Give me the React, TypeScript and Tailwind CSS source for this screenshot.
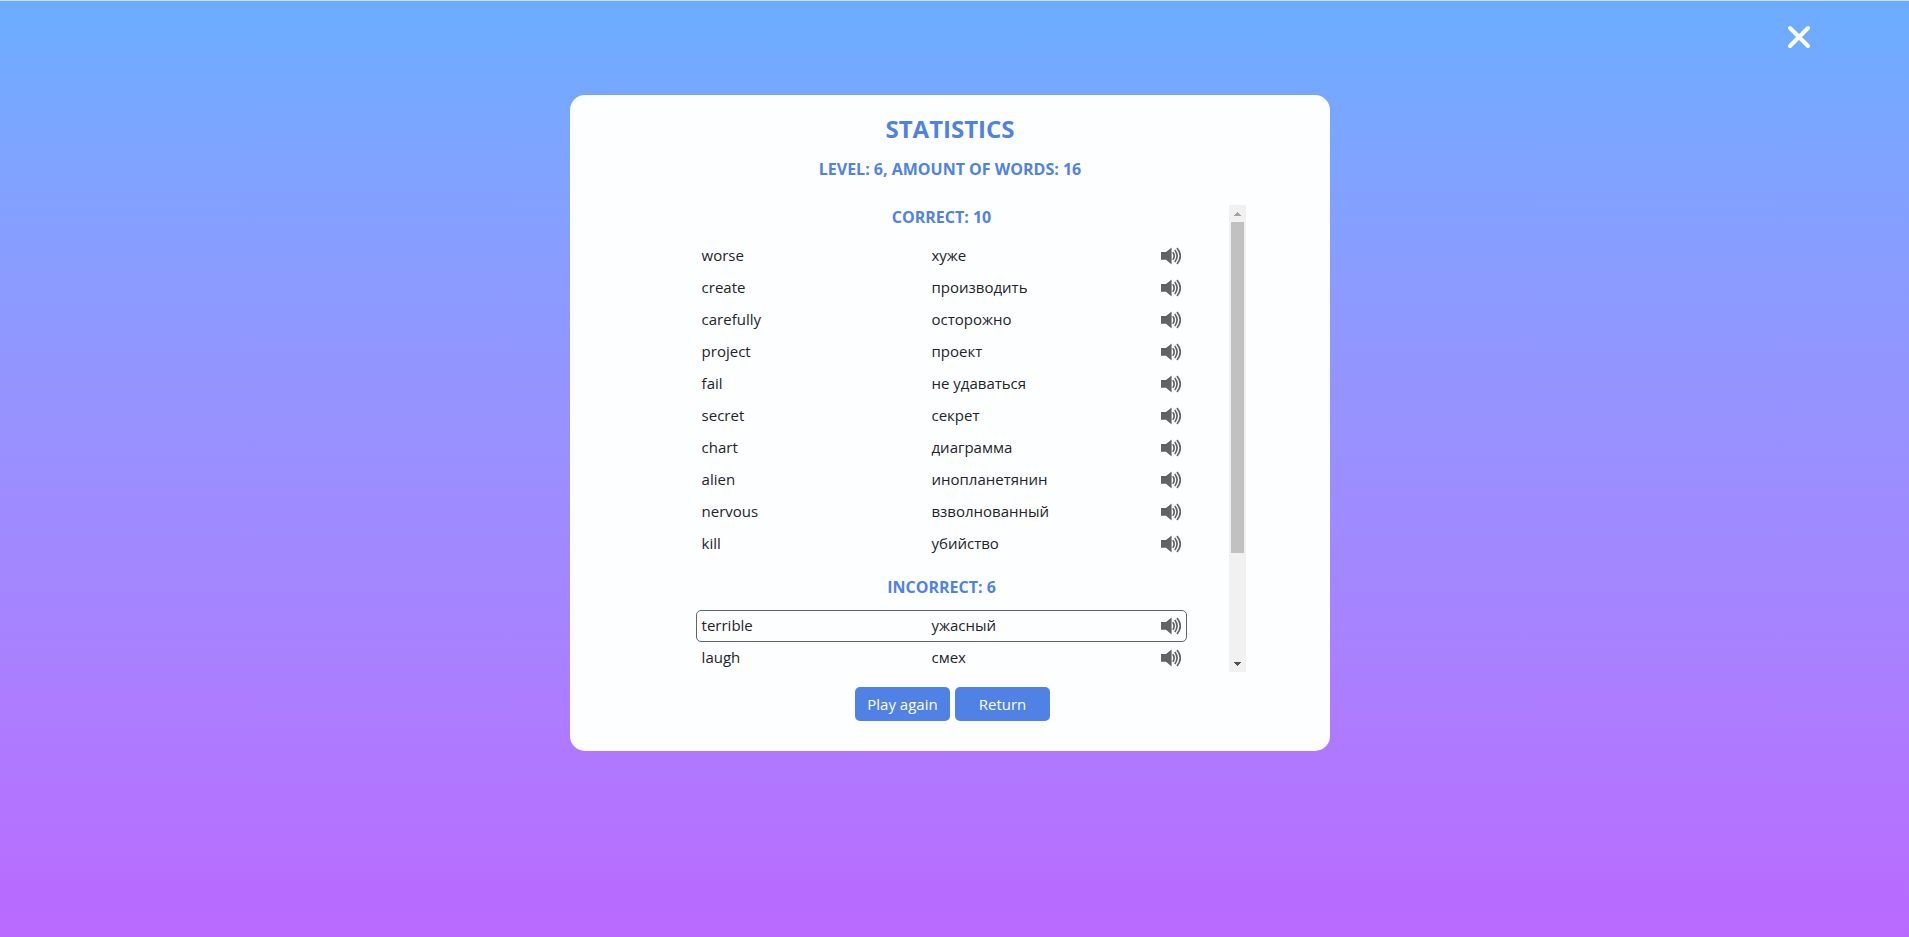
import React from "react";

type Word = { en: string; ru: string; selected?: boolean };

const correct: Word[] = [
  { en: "worse", ru: "хуже" },
  { en: "create", ru: "производить" },
  { en: "carefully", ru: "осторожно" },
  { en: "project", ru: "проект" },
  { en: "fail", ru: "не удаваться" },
  { en: "secret", ru: "секрет" },
  { en: "chart", ru: "диаграмма" },
  { en: "alien", ru: "инопланетянин" },
  { en: "nervous", ru: "взволнованный" },
  { en: "kill", ru: "убийство" },
];

const incorrect: Word[] = [
  { en: "terrible", ru: "ужасный", selected: true },
  { en: "laugh", ru: "смех" },
];

function SpeakerIcon() {
  return (
    <svg width="20" height="18" viewBox="0 0 20 18" aria-hidden="true">
      <path d="M0 5h5L10.6 .6v16.8L5 12.8H0z" fill="#636363" />
      <g fill="none" stroke="#636363" strokeWidth="1.7">
        <path d="M11.8 5.2q2.8 3.8 0 7.6" />
        <path d="M13.8 3q4.6 6 0 12" />
        <path d="M16 1q6.6 8 0 16" />
      </g>
    </svg>
  );
}

function WordTable({ title, words }: { title: string; words: Word[] }) {
  return (
    <table className="block w-full">
      <caption className="block pb-[13px] text-base leading-5 font-bold text-[#5082e6]">{title}</caption>
      <tbody className="block">
        {words.map((word) => (
          <tr
            key={word.en}
            className={
              word.selected
                ? "grid h-8 grid-cols-[48fr_48fr_20px] items-center rounded-[5px] border border-[#636363] px-[5px]"
                : "grid h-8 grid-cols-[48fr_48fr_20px] items-center rounded-[5px] border border-transparent px-[5px]"
            }
          >
            <td className="p-0 pb-0.5">{word.en}</td>
            <td className="p-0 pb-0.5">{word.ru}</td>
            <td className="p-0">
              <button type="button" aria-label={`Play ${word.en}`} className="block cursor-pointer">
                <SpeakerIcon />
              </button>
            </td>
          </tr>
        ))}
      </tbody>
    </table>
  );
}

function ScrollTrack() {
  return (
    <div className="flex w-[17px] shrink-0 flex-col items-center bg-[#f1f1f1]" aria-hidden="true">
      <div className="flex h-[17px] items-center justify-center">
        <svg width="7" height="4" viewBox="0 0 7 4" shapeRendering="crispEdges">
          <path d="M3 0h1v1h1v1h1v1h1v1H0V3h1V2h1V1h1z" fill="#a3a3a3" />
        </svg>
      </div>
      <div className="h-[331px] w-[13px] bg-[#c1c1c1]" />
      <div className="mt-auto flex h-[17px] items-center justify-center">
        <svg width="7" height="4" viewBox="0 0 7 4" shapeRendering="crispEdges">
          <path d="M0 0h7v1H6v1H5v1H4v1H3V3H2V2H1V1H0z" fill="#505050" />
        </svg>
      </div>
    </div>
  );
}

const buttonClass =
  "h-[34px] w-[95px] cursor-pointer rounded-[5px] bg-[#5082e6] text-[15px] leading-5 text-white hover:bg-[#3f70d4]";

export default function App() {
  return (
    <div className="relative min-h-screen border-t border-[#d8d8d8] bg-linear-to-b from-[#6aadff] to-[#ba69ff] pt-[94px] pr-[9px] font-['Open_Sans','Noto_Sans',sans-serif] text-[15px] leading-5 text-[#212529]">
      <button type="button" aria-label="Close" className="absolute top-6 right-[98px] cursor-pointer">
        <svg width="24" height="24" viewBox="0 0 24 24" aria-hidden="true">
          <path d="M3 3l18 18M21 3L3 21" stroke="#fff" strokeWidth="4" strokeLinecap="round" />
        </svg>
      </button>

      <main className="mx-auto flex w-2/5 min-w-[640px] flex-col items-center rounded-[15px] bg-[#fdfeff] pt-5 pb-[30px]">
        <h1 className="text-2xl leading-7 font-bold text-[#5082e6]">STATISTICS</h1>
        <p className="mt-4 text-base leading-5 font-bold text-[#5082e6]">LEVEL: 6, AMOUNT OF WORDS: 16</p>

        <div className="mt-[26px] flex h-[467px] w-[78%] overflow-hidden">
          <div className="flex grow flex-col gap-[17px] px-[42px] pt-0.5">
            <WordTable title="CORRECT: 10" words={correct} />
            <WordTable title="INCORRECT: 6" words={incorrect} />
          </div>
          <ScrollTrack />
        </div>

        <div className="mt-[15px] flex gap-[5px] pl-[5px]">
          <button type="button" className={buttonClass}>Play again</button>
          <button type="button" className={buttonClass}>Return</button>
        </div>
      </main>
    </div>
  );
}
